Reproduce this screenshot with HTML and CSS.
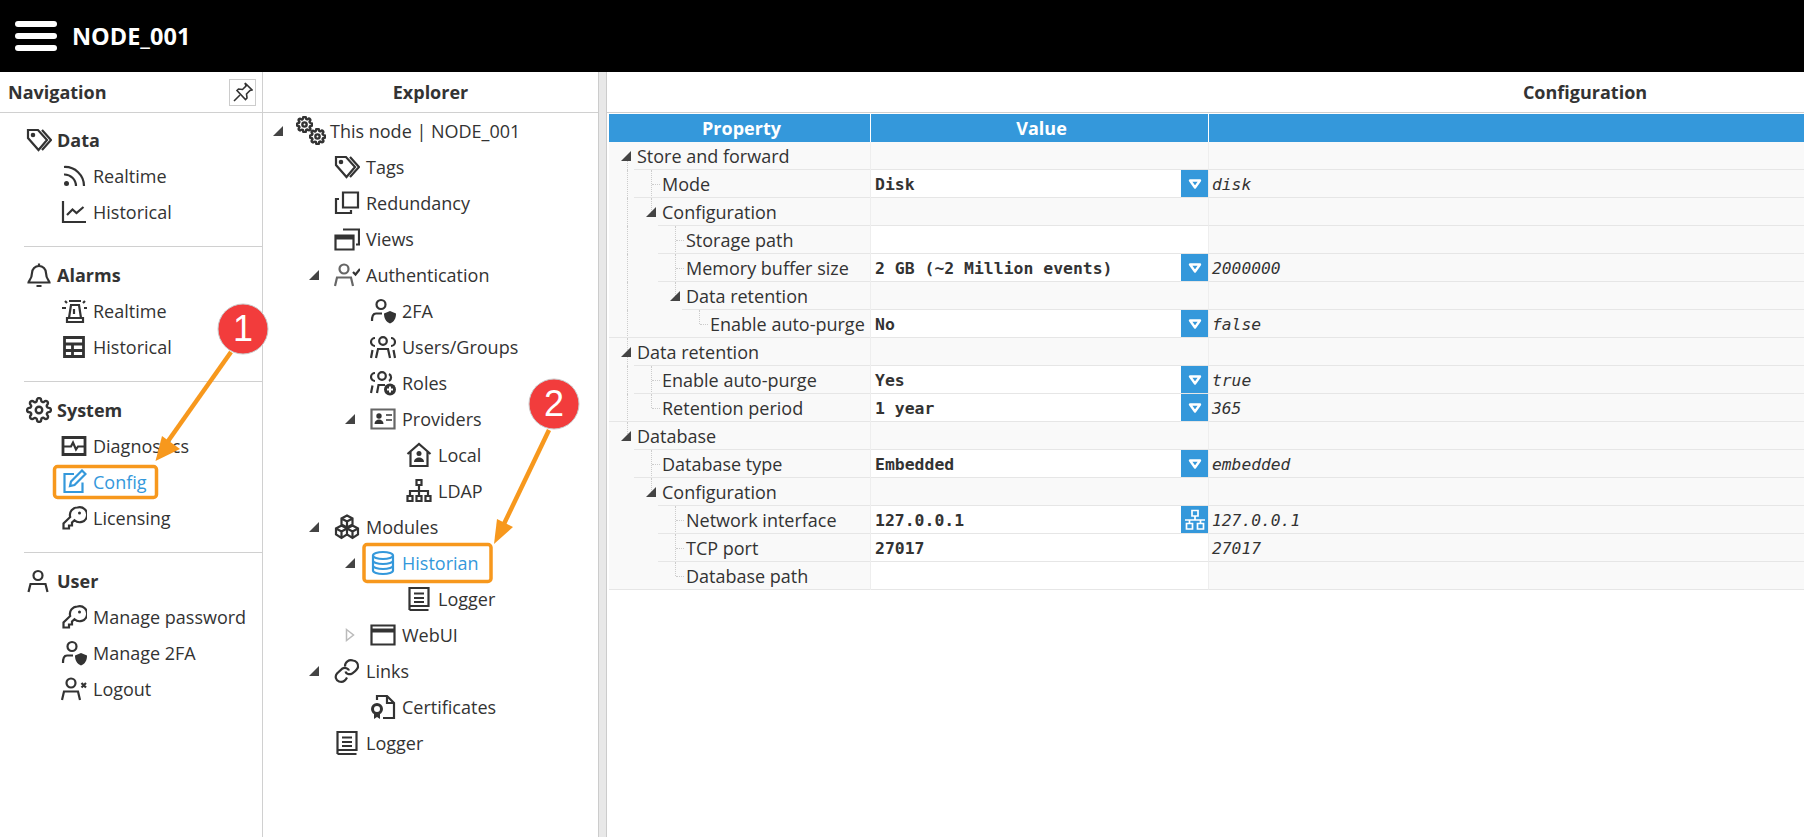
FILE: index.html
```html
<!DOCTYPE html>
<html lang="en">
<head>
<meta charset="utf-8">
<title>NODE_001</title>
<link rel="stylesheet" href="styles.css">
</head>
<body>
<svg class="defs" width="0" height="0" aria-hidden="true">
  <symbol id="i-tags" viewBox="0 0 26 26"><path d="M2 3h10l9 10-8.500 10L2 11z"/><circle cx="7" cy="8" r="1.200"/><path d="M16 3l9 10-9 10"/></symbol>
  <symbol id="i-rss" viewBox="0 0 26 26"><circle class="f" cx="5.500" cy="20.500" r="2.500"/><path d="M3 11.500a11.500 11.500 0 0 1 12 11.500"/><path d="M3 4a19 19 0 0 1 20 19"/></symbol>
  <symbol id="i-chart" viewBox="0 0 26 26"><path d="M2 2v21h23"/><path d="M6 16l5.500-5.500 4 3.500 7-6"/></symbol>
  <symbol id="i-bell" viewBox="0 0 26 26"><path d="M13 4a7 7 0 0 0-7 7c0 6-3.500 8-3.500 9.500h21c0-1.500-3.500-3.500-3.500-9.500a7 7 0 0 0-7-7z"/><path d="M13 1.500V4M10.500 24h5"/></symbol>
  <symbol id="i-siren" viewBox="0 0 26 26"><path d="M6 24h16v-4H6zM8 20l2-13h8l2 13M13 11v5"/><path d="M1 10h4M23 10h3M4 3l2 2M24 3l-2 2M8 3h12"/></symbol>
  <symbol id="i-table" viewBox="0 0 26 26"><path class="fat2" d="M3.500 3.500h19v19h-19zM3.500 10h19M3.500 16.500h19M11.500 10v12.500"/></symbol>
  <symbol id="i-gear" viewBox="0 0 24 24"><path class="thin" d="M19.400 15a1.650 1.650 0 0 0 .33 1.820l.06.06a2 2 0 0 1 0 2.830 2 2 0 0 1-2.830 0l-.06-.06a1.650 1.650 0 0 0-1.820-.33 1.650 1.650 0 0 0-1 1.510V21a2 2 0 0 1-2 2 2 2 0 0 1-2-2v-.09A1.650 1.650 0 0 0 9 19.400a1.650 1.650 0 0 0-1.820.33l-.06.06a2 2 0 0 1-2.830 0 2 2 0 0 1 0-2.830l.06-.06a1.650 1.650 0 0 0 .33-1.820 1.650 1.650 0 0 0-1.510-1H3a2 2 0 0 1-2-2 2 2 0 0 1 2-2h.09A1.650 1.650 0 0 0 4.600 9a1.650 1.650 0 0 0-.33-1.820l-.06-.06a2 2 0 0 1 0-2.830 2 2 0 0 1 2.830 0l.06.06a1.650 1.650 0 0 0 1.820.33H9a1.650 1.650 0 0 0 1-1.510V3a2 2 0 0 1 2-2 2 2 0 0 1 2 2v.09a1.650 1.650 0 0 0 1 1.510 1.650 1.650 0 0 0 1.820-.33l.06-.06a2 2 0 0 1 2.830 0 2 2 0 0 1 0 2.830l-.06.06a1.650 1.650 0 0 0-.33 1.820V9a1.650 1.650 0 0 0 1.510 1H21a2 2 0 0 1 2 2 2 2 0 0 1-2 2h-.09a1.650 1.650 0 0 0-1.510 1z"/><circle class="thin" cx="12" cy="12" r="3"/></symbol>
  <symbol id="i-cogs" viewBox="0 0 30 30"><use href="#i-gear" x="0" y="0" width="17" height="17"/><use href="#i-gear" x="13" y="12" width="17" height="17"/></symbol>
  <symbol id="i-pulse" viewBox="0 0 26 26"><path class="fat2" d="M2 4.500h22v17H2z"/><path d="M3 13.500h7l2-4 3 7 2-3h6"/></symbol>
  <symbol id="i-edit" viewBox="0 0 26 26"><path d="M13 5H3.500v18h18v-9.500"/><path d="M21 1.500 24.500 5 13.500 16l-4.500 1 1-4.500z"/></symbol>
  <symbol id="i-key" viewBox="0 0 26 26"><path d="M16.500 2.500a7.500 7.500 0 0 0-7.300 9.500L2.500 18.500v5h5.500v-3h3v-3l2.500-2.300a7.500 7.500 0 1 0 3-12.700z"/><circle class="f" cx="18.500" cy="8" r="1.500"/></symbol>
  <symbol id="i-user" viewBox="0 0 26 26"><circle cx="12" cy="7.500" r="4.500"/><path d="M2.500 24 4.500 16h15l2 8"/></symbol>
  <symbol id="i-shield" viewBox="0 0 26 26"><circle cx="11" cy="6.500" r="4.500"/><path d="M2 23c0-5 1-7.500 4-7.500h6"/><path class="f" d="M20 13l6 2.500c0 5-2 8.500-6 10-4-1.500-6-5-6-10z"/></symbol>
  <symbol id="i-userx" viewBox="0 0 26 26"><circle cx="10" cy="7" r="4.500"/><path d="M1 24l2-8.500h14l2 8.500M20.500 7l4.500 4.500M25 7l-4.500 4.500"/></symbol>
  <symbol id="i-check" viewBox="0 0 26 26"><circle cx="10" cy="7" r="4.500" class="g"/><path class="g" d="M1 24l2-8.500h14l2 8.500"/><path d="M19 10l2.500 2.500L26 7"/></symbol>
  <symbol id="i-clone" viewBox="0 0 26 26"><path d="M9 2.500h15v15H9z"/><path d="M5 9H2v14h15v-3"/></symbol>
  <symbol id="i-views" viewBox="0 0 26 26"><path d="M9 3.500h16v15h-3"/><path d="M1.500 9.500h18v14h-18z"/><path class="fat" d="M1.500 11.500h18"/></symbol>
  <symbol id="i-users" viewBox="0 0 26 26"><circle cx="13" cy="7" r="3.800"/><path d="M6 24l2-9h10l2 9M1 24l1.500-8M25 24l-1.500-8M5 12a4 4 0 0 1 0-8M21 12a4 4 0 0 0 0-8"/></symbol>
  <symbol id="i-roles" viewBox="0 0 26 26"><circle cx="12" cy="6" r="3.800"/><path d="M7 23l1.500-8H15M1 23l1.500-7.500M5 11a4 4 0 0 1 0-8M19 11a4 4 0 0 0 0-7"/><circle class="f" cx="20" cy="19.500" r="6"/><path class="w" d="M20 16.500v6M17 19.500h6"/></symbol>
  <symbol id="i-card" viewBox="0 0 26 26"><path class="g" d="M1.500 3.500h23v19h-23z"/><circle class="f" cx="9" cy="10" r="2.700"/><path class="f" d="M4.500 18c0-6 9-6 9 0z"/><path class="g" d="M16 9h6M16 14h6"/></symbol>
  <symbol id="i-house" viewBox="0 0 26 26"><path d="M1.500 12 13 2l11.500 10M4.500 10v14h17V10"/><circle class="f" cx="13" cy="11.500" r="2.500"/><path class="f" d="M8 20c0-6 10-6 10 0z"/></symbol>
  <symbol id="i-sitemap" viewBox="0 0 26 26"><path d="M10.500 2h5v5h-5zM1.500 18h5v5h-5zM10.500 18h5v5h-5zM19.500 18h5v5h-5zM13 7v11M4 18v-5h18v5"/></symbol>
  <symbol id="i-cubes" viewBox="0 0 26 26"><path d="M13 1.500l5.500 3v6l-5.500 3-5.500-3v-6zM7.500 11.500l5.500 3v6l-5.500 3.500L2 20.500v-6zM18.500 11.500l5.500 3v6l-5.500 3.500-5.500-3.500v-6zM7.500 4.500l5.500 3 5.500-3M13 7.500v6M2 14.500l5.500 3 5.500-3M7.500 17.500v6M13 14.500l5.500 3 5.500-3M18.500 17.500v6"/></symbol>
  <symbol id="i-db" viewBox="0 0 26 26"><ellipse cx="13" cy="5.500" rx="10" ry="3.500"/><path d="M3 5.500v15c0 2 4.500 3.500 10 3.500s10-1.500 10-3.500v-15M3 10.500c0 2 4.500 3.500 10 3.500s10-1.500 10-3.500M3 15.500c0 2 4.500 3.500 10 3.500s10-1.500 10-3.500"/></symbol>
  <symbol id="i-log" viewBox="0 0 26 26"><path d="M3.500 24V2h19v18h-19M3.500 24h19M8 7.500h10M8 12h10M8 16h10"/></symbol>
  <symbol id="i-window" viewBox="0 0 26 26"><path d="M1.500 3.500h23v19h-23z"/><path class="fat" d="M1.500 8.500h23"/></symbol>
  <symbol id="i-link" viewBox="0 0 26 26"><path d="M11 8.500a6 6 0 0 1 8-6 5.500 5.500 0 0 1 5 6.500c-.5 3-4 5-6 6.500-2.500 1.500-6 .5-6.500-2"/><path d="M15 12.500c-.500-2-4-3.500-6.500-2L3 15.500c-2.500 3-1 7 2 8 3 1 6 0 8-4"/></symbol>
  <symbol id="i-cert" viewBox="0 0 26 26"><path d="M7 6V2h10l7 7v15H13"/><path d="M17 2v7h7"/><circle cx="7" cy="15" r="4.500" class="fw"/><path class="f" d="M4 19v6l3-2 3 2v-6z"/></symbol>
  <symbol id="i-pin" viewBox="0 0 20 20"><path class="p" d="M12 1l7 7-2 .5-3.500 3.500.5 4-1.500 1.500L4 8.500 5.500 7l4 .5L13 4z"/><path class="p" d="M7 13l-6 6"/></symbol>
  <symbol id="i-drop" viewBox="0 0 16 12"><path class="tri" d="M3 2.500h10L8 9.500z"/></symbol>
  <symbol id="i-net" viewBox="0 0 22 22"><path class="net" d="M8 1.500h6v5.500H8zM2.500 14.500h6V20h-6zM13.500 14.500h6V20h-6zM11 7v4M1 11h20M5.500 11v3.500M16.500 11v3.500"/></symbol>
  <symbol id="i-open" viewBox="0 0 10 14"><path class="open" d="M1.500 1.500 8.500 7l-7 5.500z"/></symbol>
</svg>

<header class="topbar">
  <div class="burger"><span></span><span></span><span></span></div>
  <h1 class="node">NODE_001</h1>
</header>

<div class="main">
  <aside class="nav">
    <div class="phead phead-left">
      <span>Navigation</span>
      <button class="pin" type="button"><svg class="pin-icon"><use href="#i-pin"/></svg></button>
    </div>
    <section class="sec first">
      <div class="sec-h"><svg class="ic"><use href="#i-tags"/></svg>Data</div>
      <div class="sec-i"><svg class="ic"><use href="#i-rss"/></svg>Realtime</div>
      <div class="sec-i"><svg class="ic"><use href="#i-chart"/></svg>Historical</div>
    </section>
    <section class="sec">
      <div class="sec-h"><svg class="ic"><use href="#i-bell"/></svg>Alarms</div>
      <div class="sec-i"><svg class="ic"><use href="#i-siren"/></svg>Realtime</div>
      <div class="sec-i"><svg class="ic"><use href="#i-table"/></svg>Historical</div>
    </section>
    <section class="sec">
      <div class="sec-h"><svg class="ic"><use href="#i-gear"/></svg>System</div>
      <div class="sec-i"><svg class="ic"><use href="#i-pulse"/></svg>Diagnostics</div>
      <div class="sec-i active"><svg class="ic"><use href="#i-edit"/></svg>Config</div>
      <div class="sec-i"><svg class="ic"><use href="#i-key"/></svg>Licensing</div>
    </section>
    <section class="sec last">
      <div class="sec-h"><svg class="ic"><use href="#i-user"/></svg>User</div>
      <div class="sec-i"><svg class="ic"><use href="#i-key"/></svg>Manage password</div>
      <div class="sec-i"><svg class="ic"><use href="#i-shield"/></svg>Manage 2FA</div>
      <div class="sec-i"><svg class="ic"><use href="#i-userx"/></svg>Logout</div>
    </section>
  </aside>

  <aside class="explorer">
    <div class="phead">Explorer</div>
    <div class="row l0"><i class="arr"></i><span class="slot"><svg class="ic big"><use href="#i-cogs"/></svg></span>This node | NODE_001</div>
    <div class="row l1"><i class="noarr"></i><span class="slot"><svg class="ic"><use href="#i-tags"/></svg></span>Tags</div>
    <div class="row l1"><i class="noarr"></i><span class="slot"><svg class="ic"><use href="#i-clone"/></svg></span>Redundancy</div>
    <div class="row l1"><i class="noarr"></i><span class="slot"><svg class="ic"><use href="#i-views"/></svg></span>Views</div>
    <div class="row l1"><i class="arr"></i><span class="slot"><svg class="ic"><use href="#i-check"/></svg></span>Authentication</div>
    <div class="row l2"><i class="noarr"></i><span class="slot"><svg class="ic"><use href="#i-shield"/></svg></span>2FA</div>
    <div class="row l2"><i class="noarr"></i><span class="slot"><svg class="ic"><use href="#i-users"/></svg></span>Users/Groups</div>
    <div class="row l2"><i class="noarr"></i><span class="slot"><svg class="ic"><use href="#i-roles"/></svg></span>Roles</div>
    <div class="row l2"><i class="arr"></i><span class="slot"><svg class="ic"><use href="#i-card"/></svg></span>Providers</div>
    <div class="row l3"><i class="noarr"></i><span class="slot"><svg class="ic"><use href="#i-house"/></svg></span>Local</div>
    <div class="row l3"><i class="noarr"></i><span class="slot"><svg class="ic"><use href="#i-sitemap"/></svg></span>LDAP</div>
    <div class="row l1"><i class="arr"></i><span class="slot"><svg class="ic"><use href="#i-cubes"/></svg></span>Modules</div>
    <div class="row l2 active"><i class="arr"></i><span class="slot"><svg class="ic"><use href="#i-db"/></svg></span>Historian</div>
    <div class="row l3"><i class="noarr"></i><span class="slot"><svg class="ic"><use href="#i-log"/></svg></span>Logger</div>
    <div class="row l2"><svg class="arr-open"><use href="#i-open"/></svg><span class="slot"><svg class="ic"><use href="#i-window"/></svg></span>WebUI</div>
    <div class="row l1"><i class="arr"></i><span class="slot"><svg class="ic"><use href="#i-link"/></svg></span>Links</div>
    <div class="row l2"><i class="noarr"></i><span class="slot"><svg class="ic"><use href="#i-cert"/></svg></span>Certificates</div>
    <div class="row l1"><i class="noarr"></i><span class="slot"><svg class="ic"><use href="#i-log"/></svg></span>Logger</div>
  </aside>

  <div class="splitter"></div>

  <main class="config">
    <div class="phead phead-config">Configuration</div>
    <table class="grid">
      <colgroup><col class="c1"><col class="c2"><col></colgroup>
      <thead><tr><th>Property</th><th>Value</th><th></th></tr></thead>
      <tbody>
        <tr class="grp"><td class="p"><i class="g g0 hb"></i><div class="pc lv0"><i class="arr"></i>Store and forward</div></td><td></td><td></td></tr>
        <tr><td class="p"><i class="g g0"></i><i class="g g1"></i><div class="pc lv1 leaf">Mode</div></td><td class="v">Disk<span class="btn"><svg class="drop"><use href="#i-drop"/></svg></span></td><td class="r">disk</td></tr>
        <tr class="grp"><td class="p"><i class="g g0"></i><i class="g g1 ht"></i><div class="pc lv1"><i class="arr"></i>Configuration</div></td><td></td><td></td></tr>
        <tr><td class="p"><i class="g g0"></i><i class="g g2"></i><div class="pc lv2 leaf">Storage path</div></td><td class="v"></td><td></td></tr>
        <tr><td class="p"><i class="g g0"></i><i class="g g2"></i><div class="pc lv2 leaf">Memory buffer size</div></td><td class="v">2 GB (~2 Million events)<span class="btn"><svg class="drop"><use href="#i-drop"/></svg></span></td><td class="r">2000000</td></tr>
        <tr class="grp"><td class="p"><i class="g g0"></i><i class="g g2 ht"></i><div class="pc lv2"><i class="arr"></i>Data retention</div></td><td></td><td></td></tr>
        <tr><td class="p"><i class="g g0"></i><i class="g g3 ht"></i><div class="pc lv3 leaf">Enable auto-purge</div></td><td class="v">No<span class="btn"><svg class="drop"><use href="#i-drop"/></svg></span></td><td class="r">false</td></tr>
        <tr class="grp"><td class="p"><i class="g g0"></i><div class="pc lv0"><i class="arr"></i>Data retention</div></td><td></td><td></td></tr>
        <tr><td class="p"><i class="g g0"></i><i class="g g1"></i><div class="pc lv1 leaf">Enable auto-purge</div></td><td class="v">Yes<span class="btn"><svg class="drop"><use href="#i-drop"/></svg></span></td><td class="r">true</td></tr>
        <tr><td class="p"><i class="g g0"></i><i class="g g1 ht"></i><div class="pc lv1 leaf">Retention period</div></td><td class="v">1 year<span class="btn"><svg class="drop"><use href="#i-drop"/></svg></span></td><td class="r">365</td></tr>
        <tr class="grp"><td class="p"><i class="g g0 ht"></i><div class="pc lv0"><i class="arr"></i>Database</div></td><td></td><td></td></tr>
        <tr><td class="p"><i class="g g1"></i><div class="pc lv1 leaf">Database type</div></td><td class="v">Embedded<span class="btn"><svg class="drop"><use href="#i-drop"/></svg></span></td><td class="r">embedded</td></tr>
        <tr class="grp"><td class="p"><i class="g g1 ht"></i><div class="pc lv1"><i class="arr"></i>Configuration</div></td><td></td><td></td></tr>
        <tr><td class="p"><i class="g g2"></i><div class="pc lv2 leaf">Network interface</div></td><td class="v">127.0.0.1<span class="btn"><svg class="net-ic"><use href="#i-net"/></svg></span></td><td class="r">127.0.0.1</td></tr>
        <tr><td class="p"><i class="g g2"></i><div class="pc lv2 leaf">TCP port</div></td><td class="v">27017</td><td class="r">27017</td></tr>
        <tr class="end"><td class="p"><i class="g g2 ht"></i><div class="pc lv2 leaf">Database path</div></td><td class="v"></td><td></td></tr>
      </tbody>
    </table>
  </main>
</div>

<svg class="overlay" viewBox="0 0 1804 837" aria-hidden="true">
  <rect class="box" x="54.500" y="466.500" width="102" height="31" rx="3"/>
  <rect class="box" x="364" y="544.500" width="127" height="37" rx="3"/>
  <path class="shaft" d="M231 352 166 444"/>
  <path class="head" d="M155.500 461 162 436 180 449z"/>
  <path class="shaft" d="M549 430 503 526"/>
  <path class="head" d="M494 544 497 519 513 527z"/>
  <circle class="badge" cx="243" cy="329" r="25"/>
  <text class="num" x="243" y="341">1</text>
  <circle class="badge" cx="554" cy="404" r="25"/>
  <text class="num" x="554" y="416">2</text>
</svg>
</body>
</html>
```
FILE: styles.css
```css
* { box-sizing: border-box; }
html, body { margin: 0; height: 100%; }
body {
  display: flex;
  flex-direction: column;
  overflow: hidden;
  position: relative;
  background: #fff;
  color: #333;
  font-family: "Open Sans", "Noto Sans", sans-serif;
  font-size: 18px;
}
.defs { position: absolute; }

.topbar {
  flex: 0 0 72px;
  display: flex;
  align-items: center;
  padding-left: 15px;
  background: #000;
}
.burger { display: flex; flex-direction: column; gap: 6px; width: 42px; margin-right: 15px; }
.burger span { display: block; height: 6px; border-radius: 3px; background: #fff; }
.node { margin: 0; color: #fff; font-size: 23.500px; font-weight: 700; }

.main { flex: 1; display: flex; min-height: 0; }

.phead {
  height: 41px;
  display: flex;
  align-items: center;
  justify-content: center;
  border-bottom: 1px solid #d0d0d0;
  font-weight: 700;
  font-size: 18px;
}
.phead-left { justify-content: space-between; padding: 0 6px 0 8px; }
.phead-config { padding-left: 2px; }
.pin {
  width: 27px; height: 27px; padding: 0;
  display: flex; align-items: center; justify-content: center;
  background: #fff; border: 1px solid #ccc;
}
.pin-icon { width: 20px; height: 20px; }
.p { fill: none; stroke: #333; stroke-width: 1.600; }

.ic { width: 26px; height: 26px; fill: none; stroke: currentColor; stroke-width: 2.200; flex: none; }
.ic.big { width: 30px; height: 30px; stroke-width: 3.400; }
svg .f { fill: currentColor; stroke: none; }
svg .fw { fill: #fff; stroke-width: 3; }
svg .w { stroke: #fff; stroke-width: 2; }
svg .g { stroke: #666; }
svg .fat { stroke-width: 4; }
svg .fat2 { stroke-width: 2.800; }

.nav {
  flex: 0 0 263px;
  border-right: 1px solid #d0d0d0;
}
.sec { padding: 10px 0 16px; margin-left: 24px; border-bottom: 1px solid #d0d0d0; }
.sec.first { padding-top: 9px; }
.sec.last { border-bottom: 0; }
.sec-h {
  height: 36px;
  display: flex; align-items: center; gap: 5px;
  margin-left: 2px;
  font-weight: 700;
}
.sec-i {
  height: 36px;
  display: flex; align-items: center; gap: 6px;
  margin-left: 37px;
}
.active { color: #3498db; }

.explorer { flex: 0 0 335px; }
.row { height: 36px; display: flex; align-items: center; }
.l0 { padding-left: 10px; }
.l1 { padding-left: 46px; }
.l2 { padding-left: 82px; }
.l3 { padding-left: 118px; }
.arr, .noarr { flex: none; display: block; width: 10px; height: 10px; margin-right: 8px; }
.arr { background: #444; clip-path: polygon(100% 0, 100% 100%, 0 100%); }
.arr-open { flex: none; width: 10px; height: 14px; margin-right: 8px; }
.open { fill: #fff; stroke: #bbb; stroke-width: 1.500; }
.slot { flex: none; width: 39px; display: flex; justify-content: center; padding-left: 1px; }

.splitter {
  flex: 0 0 9px;
  background: #e8e8e8;
  border-left: 1px solid #ccc;
  border-right: 1px solid #ccc;
}

.config { flex: 0 0 1954px; }
.grid {
  width: 100%;
  border-collapse: separate;
  border-spacing: 0;
  table-layout: fixed;
  margin: 1px 0 0 2px;
  font-size: 18px;
}
.c1 { width: 262px; }
.c2 { width: 338px; }
.grid th {
  height: 28px;
  padding: 0 0 0 4px;
  background: #3498db;
  color: #fff;
  font-weight: 700;
  font-size: 18px;
  border-right: 1px solid #fff;
}
.grid td {
  height: 28px;
  padding: 0;
  background: #f9f9f9;
  border-right: 1px solid #eee;
  border-bottom: 1px solid #e6e6e6;
  white-space: nowrap;
}
.grid .p { position: relative; border-bottom: 0; vertical-align: top; }
.grid .end .p { box-shadow: inset 0 -1px #e6e6e6; }
.pc {
  height: 29px;
  margin-top: -1px;
  display: flex;
  align-items: center;
  position: relative;
  border-top: 1px solid #e6e6e6;
}
.grp:first-child .pc { border-top-color: transparent; }
.lv0 { padding-left: 28px; }
.lv1 { padding-left: 28px; margin-left: 25px; }
.lv2 { padding-left: 28px; margin-left: 49px; }
.lv3 { padding-left: 28px; margin-left: 73px; }
.pc .arr { position: absolute; margin: 0; left: 12px; }
.leaf::before {
  content: "";
  position: absolute;
  left: 18px; top: 14px;
  width: 8px;
  border-top: 1px dotted #ccc;
}

.g { position: absolute; top: 0; bottom: 0; border-left: 1px dotted #ccc; }
.g0 { left: 18px; }
.g1 { left: 42px; }
.g2 { left: 66px; }
.g3 { left: 90px; }
.ht { bottom: 14px; }
.hb { top: 14px; }

.grid .v {
  position: relative;
  padding: 1px 0 0 4px;
  background: #fff;
  font: 700 16.450px "DejaVu Sans Mono", monospace;
}
.grid .r {
  padding: 1px 0 0 3px;
  font: italic 400 16.300px "DejaVu Sans Mono", monospace;
}
.btn {
  position: absolute;
  top: 0; right: 0;
  width: 27px; height: 27px;
  display: flex; align-items: center; justify-content: center;
  background: #3498db;
}
.drop { width: 16px; height: 12px; }
.tri { fill: #3498db; stroke: #fff; stroke-width: 2.400; stroke-linejoin: round; }
.net-ic { width: 22px; height: 22px; }
.net { fill: none; stroke: #fff; stroke-width: 1.700; }

.overlay {
  position: absolute;
  inset: 0;
  width: 1804px;
  height: 837px;
  pointer-events: none;
}
.box { fill: none; stroke: #f7981d; stroke-width: 3.500; }
.shaft { fill: none; stroke: #f7981d; stroke-width: 4.500; }
.head { fill: #f7981d; }
.badge { fill: #f23c3c; stroke: #c9c9c9; stroke-width: 1; }
.num {
  fill: #fff;
  font: 400 36px "Liberation Sans", sans-serif;
  text-anchor: middle;
}
```
